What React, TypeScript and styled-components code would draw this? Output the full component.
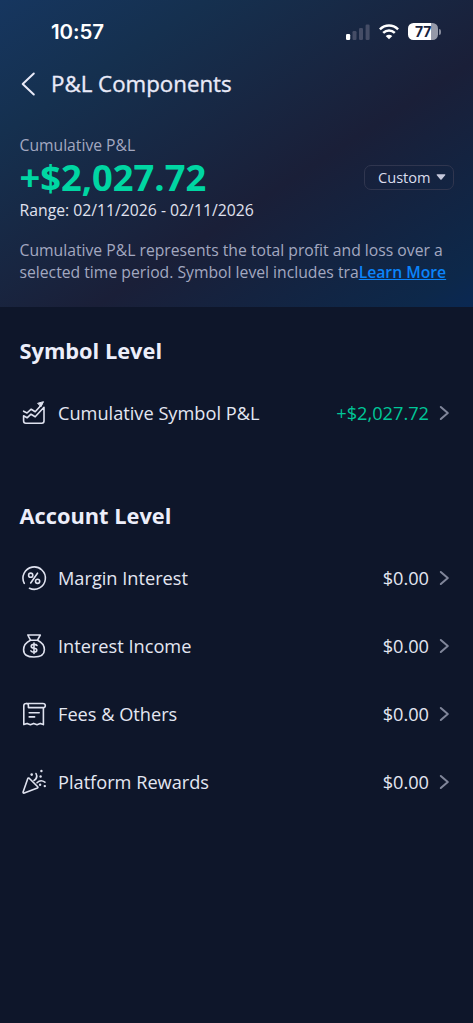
import React from "react";
import styled, { createGlobalStyle } from "styled-components";

const GlobalStyle = createGlobalStyle`
  * { box-sizing: border-box; }
  body { margin: 0; background: #0e162a; }
`;

const Screen = styled.main`
  width: 473px;
  height: 1023px;
  overflow: hidden;
  background: #0e162a;
  color: #e4e7f2;
  font-family: "Open Sans", "Noto Sans", sans-serif;
`;

const Hero = styled.header`
  height: 307px;
  background: linear-gradient(to bottom right, #16365f 0%, #15304f 22%, #1a1f38 60%, #0d284a 93%, #0a2853 100%);
`;

const StatusBar = styled.div`
  height: 62px;
  padding: 1px 32px 0 51px;
  display: flex;
  align-items: center;
  justify-content: space-between;
`;

const Clock = styled.time`
  color: #fff;
  font: 600 20.5px/24px Inter, sans-serif;
  letter-spacing: -0.1px;
`;

const StatusIcons = styled.div`
  display: flex;
  align-items: center;
  gap: 9px;
  svg { display: block; }
`;

const Battery = styled.div`
  display: flex;
  align-items: center;
  gap: 1px;
`;

const BatteryBody = styled.div<{ $level: number }>`
  width: 30px;
  height: 17px;
  border-radius: 5.5px;
  background: linear-gradient(to right, #fff ${(p) => p.$level}%, #9599a8 ${(p) => p.$level}%);
  color: #17223d;
  text-align: center;
  font: 700 14px/17px Inter, sans-serif;
  letter-spacing: -0.3px;
`;

const BatteryTip = styled.span`
  width: 2px;
  height: 6px;
  border-radius: 0 2px 2px 0;
  background: #858a9b;
`;

const TitleBar = styled.div`
  height: 44px;
  padding-left: 20px;
  display: flex;
  align-items: center;
  gap: 15px;
  svg { display: block; }
`;

const Title = styled.h1`
  margin: 0;
  font-size: 22.3px;
  line-height: 30px;
  font-weight: 500;
  -webkit-text-stroke: 0.35px #e9eaf8;
  color: #e9eaf8;
`;

const Summary = styled.section`
  padding: 28px 19px 0 19.5px;
  display: flex;
  justify-content: space-between;
`;

const Label = styled.div`
  font-size: 15.7px;
  line-height: 22px;
  color: #a3a8c0;
`;

const Total = styled.div`
  font-size: 36.3px;
  line-height: 43px;
  font-weight: 700;
  color: #00d6a3;
`;

const Range = styled.div`
  font-size: 15.75px;
  line-height: 22px;
  color: #e0e2ef;
`;

const PeriodButton = styled.button`
  width: 90px;
  height: 25px;
  margin-top: 31px;
  padding: 0 7px 1px 13px;
  display: flex;
  align-items: center;
  justify-content: space-between;
  border: 1px solid #30364f;
  border-radius: 7px;
  background: transparent;
  color: #dadded;
  font: 400 14.6px/20px "Open Sans", sans-serif;
`;

const Description = styled.p`
  margin: 18px 0 0;
  padding-left: 19.5px;
  font-size: 15.72px;
  line-height: 22px;
  color: #a3a8c0;
  white-space: nowrap;
`;

const LearnMore = styled.a`
  color: #0b84fa;
  font-weight: 600;
  text-decoration: underline;
  text-decoration-thickness: 1px;
  text-underline-offset: 1px;
`;

const Section = styled.section`
  height: 165px;
  padding: 29px 20px 0 19.5px;
`;

const SectionTitle = styled.h2`
  margin: 0 0 13px;
  font-size: 21.8px;
  line-height: 30px;
  font-weight: 700;
  color: #eceefa;
`;

const Row = styled.div`
  height: 68px;
  display: flex;
  align-items: center;
  svg { display: block; flex: none; }
`;

const RowLabel = styled.span`
  margin-left: 10.5px;
  flex: 1;
  font-size: 18.2px;
  line-height: 26px;
`;

const Amount = styled.span<{ $gain?: boolean }>`
  margin-right: 6px;
  font-size: 18.2px;
  line-height: 26px;
  color: ${(p) => (p.$gain ? "#00c798" : "#e4e7f2")};
`;

const LineIcon = ({ children }: { children: React.ReactNode }) => (
  <svg width="28" height="28" viewBox="0 0 28 28" fill="none" stroke="#dfe2ef" strokeWidth="1.6" strokeLinecap="round" strokeLinejoin="round">
    {children}
  </svg>
);

const ChartIcon = () => (
  <LineIcon>
    <path d="M3.6 12.2 7 14l4.2-3.800 4 2.500 6.300-7" />
    <path d="m18 4.200 5.500-1.500-2.400 4.700z" fill="#dfe2ef" strokeWidth="1" />
    <path d="M3.600 16.800v5.300q0 2.200 2.200 2.200h16q2.200 0 2.200-2.200V8.300l-8.800 9.500-4.200-2.600-3.900 3.600z" />
  </LineIcon>
);

const PercentIcon = () => (
  <LineIcon>
    <path d="M4.300 19.400A11.200 11.200 0 1 1 9.500 24.300" />
    <circle cx="10.700" cy="11.200" r="2.100" />
    <circle cx="17.600" cy="17.300" r="2.100" />
    <path d="M17.500 9.200 10.700 19" />
  </LineIcon>
);

const MoneyBagIcon = () => (
  <LineIcon>
    <path d="M7.800 3h12.500l-2.800 5.200c4.400 2 6.900 5.600 6.900 9.600 0 5-3.500 7.200-10.400 7.200S3.600 22.800 3.600 17.800c0-4 2.500-7.600 6.900-9.600z" />
    <path d="M10.500 8.200h7" />
    <path d="M17 13.500q-.7-1.100-3-1.100c-3.700 0-3.700 3.800 0 3.800s3.700 3.900 0 3.900q-2.300 0-3.100-1.200M14 11v10.500" />
  </LineIcon>
);

const ReceiptIcon = () => (
  <LineIcon>
    <path d="M23.200 7.600H8.400V5.400q0-1.900-2-1.900h16.400q2.500 0 2.500 2.100t-2.100 2z" />
    <path d="M6.400 3.500q-2.600 0-2.600 2.200v18.900l3.300-1.200 3.300 1.300 3.300-1.300 3.300 1.300 3.200-1.300 3.200 1.200V7.800" />
    <path d="M9.200 12.700h10M9.200 16.900h5.400" />
  </LineIcon>
);

const PartyIcon = () => (
  <LineIcon>
    <path d="m9.200 10.200 8.500 8.600q.6.700-.3 1.100L4.300 25q-1.500.4-1.200-1L7.800 10.600q.5-1.100 1.400-.4z" />
    <path d="M14 12.500c2.500-1.600 3.700-3.700 2-7M17 14.800q3.600-3.700 7.900-.6" />
    <g fill="#dfe2ef" stroke="none">
      <circle cx="11.700" cy="6.600" r="1.300" />
      <circle cx="21.400" cy="3" r="1.200" />
      <circle cx="20.600" cy="8.500" r="1.200" />
      <circle cx="20.100" cy="16.800" r="1.200" />
      <circle cx="24.800" cy="18.100" r="1.200" />
    </g>
  </LineIcon>
);

const Chevron = () => (
  <svg width="18" height="20" viewBox="0 0 18 20" fill="none" stroke="#80869a" strokeWidth="2" strokeLinecap="round" strokeLinejoin="round">
    <path d="m5.800 4 7 6-7 6" />
  </svg>
);

type Entry = { label: string; amount: string; icon: React.ReactNode; gain?: boolean };

const symbolRows: Entry[] = [
  { label: "Cumulative Symbol P&L", amount: "+$2,027.72", icon: <ChartIcon />, gain: true },
];

const accountRows: Entry[] = [
  { label: "Margin Interest", amount: "$0.00", icon: <PercentIcon /> },
  { label: "Interest Income", amount: "$0.00", icon: <MoneyBagIcon /> },
  { label: "Fees & Others", amount: "$0.00", icon: <ReceiptIcon /> },
  { label: "Platform Rewards", amount: "$0.00", icon: <PartyIcon /> },
];

const Group = ({ title, rows }: { title: string; rows: Entry[] }) => (
  <Section>
    <SectionTitle>{title}</SectionTitle>
    {rows.map((row) => (
      <Row key={row.label}>
        {row.icon}
        <RowLabel>{row.label}</RowLabel>
        <Amount $gain={row.gain}>{row.amount}</Amount>
        <Chevron />
      </Row>
    ))}
  </Section>
);

export default function App() {
  return (
    <Screen>
      <GlobalStyle />
      <Hero>
        <StatusBar>
          <Clock>10:57</Clock>
          <StatusIcons>
            <svg width="24" height="16" viewBox="0 0 24 16">
              <rect x="0" y="10" width="4.200" height="6" rx="1.200" fill="#fff" />
              <g fill="#454d66">
                <rect x="6.500" y="7" width="4" height="9" rx="1.200" />
                <rect x="13" y="4" width="4" height="12" rx="1.200" />
                <rect x="19.600" y="0.500" width="4" height="15.500" rx="1.200" />
              </g>
            </svg>
            <svg width="20" height="16" viewBox="0 0 20 16" fill="none" stroke="#fff" strokeWidth="2.500">
              <path d="M.9 5.300c5.300-5.100 12.900-5.100 18.200 0M4.200 8.900c3.400-3.300 8.200-3.300 11.600 0" />
              <path d="M10 15.300 6.700 12q3.300-2.500 6.600 0z" fill="#fff" stroke="none" />
            </svg>
            <Battery>
              <BatteryBody $level={77}>77</BatteryBody>
              <BatteryTip />
            </Battery>
          </StatusIcons>
        </StatusBar>
        <TitleBar>
          <svg width="16" height="26" viewBox="0 0 16 26" fill="none" stroke="#e9eaf8" strokeWidth="2" strokeLinecap="round" strokeLinejoin="round">
            <path d="M13.800 2.500 2.700 13l11.100 10.500" />
          </svg>
          <Title>P&amp;L Components</Title>
        </TitleBar>
        <Summary>
          <div>
            <Label>Cumulative P&amp;L</Label>
            <Total>+$2,027.72</Total>
            <Range>Range: 02/11/2026 - 02/11/2026</Range>
          </div>
          <PeriodButton>
            Custom
            <svg width="10" height="6" viewBox="0 0 10 6">
              <path d="M1.200.2h7.600q1 .2.400 1L5.600 5.400q-.6.600-1.200 0L.8 1.200q-.6-.8.400-1z" fill="#c6c9dc" />
            </svg>
          </PeriodButton>
        </Summary>
        <Description>
          Cumulative P&amp;L represents the total profit and loss over a<br />
          selected time period. Symbol level includes tra<LearnMore>Learn More</LearnMore>
        </Description>
      </Hero>
      <Group title="Symbol Level" rows={symbolRows} />
      <Group title="Account Level" rows={accountRows} />
    </Screen>
  );
}
